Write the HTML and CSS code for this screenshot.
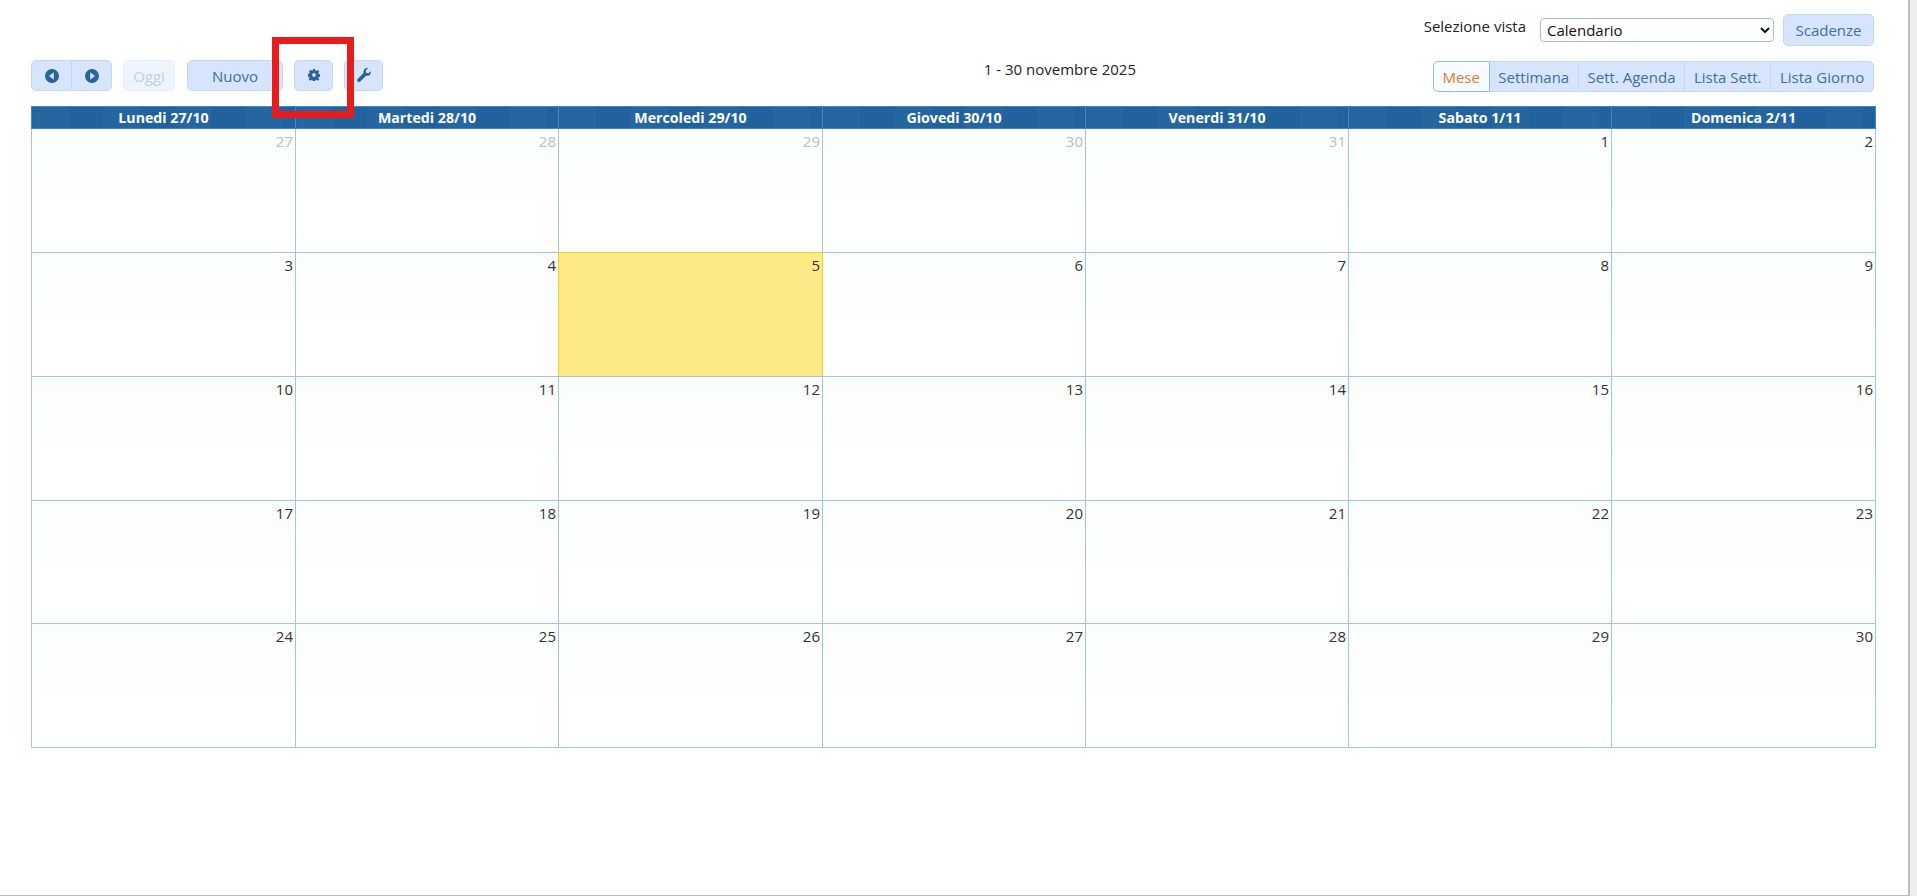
FILE: index.html
```html
<!DOCTYPE html>
<html lang="it">
<head>
<meta charset="utf-8">
<title>Calendario</title>
<link rel="stylesheet" href="styles.css">
</head>
<body>
<div class="window">
  <main class="page">
    <div class="topbar">
      <span class="view-label">Selezione vista</span>
      <select class="view-select"><option>Calendario</option></select>
      <button class="btn btn-scad">Scadenze</button>
    </div>
    <div class="toolbar">
      <div class="tools">
        <div class="group">
          <button class="btn seg btn-arrow" aria-label="Precedente"><svg class="ico" viewBox="0 0 14 14"><path fill-rule="evenodd" d="M7 0a7 7 0 1 1 0 14A7 7 0 0 1 7 0zM8.800 3.200 4 7l4.800 3.800z"/></svg></button>
          <button class="btn seg btn-arrow" aria-label="Successivo"><svg class="ico" viewBox="0 0 14 14"><path fill-rule="evenodd" d="M7 0a7 7 0 1 1 0 14A7 7 0 0 1 7 0zM5.200 3.200 10 7l-4.800 3.800z"/></svg></button>
        </div>
        <button class="btn btn-oggi">Oggi</button>
        <button class="btn btn-nuovo">Nuovo</button>
        <button class="btn btn-icon" aria-label="Impostazioni"><svg class="ico ico-gear" viewBox="0 0 14 14"><path fill-rule="evenodd" d="M5.700 0h2.600l.4 2 1 .4 1.700-1.100 1.800 1.800-1.100 1.700.4 1 2 .4v2.600l-2 .4-.4 1 1.100 1.700-1.800 1.800-1.700-1.100-1 .4-.4 2H5.700l-.4-2-1-.4-1.700 1.100-1.800-1.800 1.100-1.700-.4-1-2-.4V5.700l2-.4.4-1L1.300 2.600l1.800-1.800 1.700 1.100 1-.4zM7 4.800a2.200 2.200 0 1 0 0 4.400 2.200 2.200 0 0 0 0-4.400z"/></svg></button>
        <button class="btn btn-icon btn-wrench" aria-label="Strumenti"><svg class="ico ico-wrench" viewBox="0 0 14 14"><path d="M13.800 3.200c.3 1.400-.1 2.800-1.100 3.700-1 .9-2.400 1.200-3.600.8L3.300 13.500c-.7.700-1.900.7-2.600 0-.7-.7-.7-1.900 0-2.600l5.800-5.800C6.100 3.800 6.400 2.400 7.300 1.400 8.300.4 9.700-.1 11 .2L8.700 2.500l.4 2.200 2.200.5z"/></svg></button>
      </div>
      <div class="title">1 - 30 novembre 2025</div>
      <div class="group views">
        <button class="btn seg view active">Mese</button>
        <button class="btn seg view">Settimana</button>
        <button class="btn seg view">Sett. Agenda</button>
        <button class="btn seg view">Lista Sett.</button>
        <button class="btn seg view">Lista Giorno</button>
      </div>
    </div>
    <table class="cal">
      <thead>
        <tr><th>Lunedi 27/10</th><th>Martedi 28/10</th><th>Mercoledi 29/10</th><th>Giovedi 30/10</th><th class="narrow">Venerdi 31/10</th><th>Sabato 1/11</th><th>Domenica 2/11</th></tr>
      </thead>
      <tbody>
        <tr><td class="other">27</td><td class="other">28</td><td class="other">29</td><td class="other">30</td><td class="other">31</td><td>1</td><td>2</td></tr>
        <tr><td>3</td><td>4</td><td class="today">5</td><td>6</td><td>7</td><td>8</td><td>9</td></tr>
        <tr><td>10</td><td>11</td><td>12</td><td>13</td><td>14</td><td>15</td><td>16</td></tr>
        <tr class="row-short"><td>17</td><td>18</td><td>19</td><td>20</td><td>21</td><td>22</td><td>23</td></tr>
        <tr><td>24</td><td>25</td><td>26</td><td>27</td><td>28</td><td>29</td><td>30</td></tr>
      </tbody>
    </table>
    <div class="marker"></div>
  </main>
  <div class="scroll-track"></div>
</div>
</body>
</html>
```

FILE: styles.css
```css
* { box-sizing: border-box; }
html, body { margin: 0; height: 100%; overflow: hidden; background: #eeeeee; }
body { font-family: "Open Sans", "Liberation Sans", sans-serif; font-size: 15px; color: #222; }
.window { display: flex; height: 896px; }
.page {
  position: relative;
  width: 1910px;
  height: 896px;
  padding: 14px 34px 0 31px;
  background: #fff;
  border-right: 2px solid #bcbcbc;
  border-bottom: 1px solid #bcbcbc;
}
.scroll-track { flex: 1; background: #eeeeee; }
.topbar { display: flex; align-items: flex-start; justify-content: flex-end; height: 46px; }
.view-label { margin-top: 3px; margin-right: 14px; color: #222; line-height: 19px; }
.view-select {
  width: 234px; height: 24px; margin-top: 4px; margin-right: 9px; padding: 0 0 0 2px;
  font: 15px "Open Sans", sans-serif; color: #111; background: #fff;
  border: 1px solid #9cc2e2; border-radius: 4px;
}
.btn {
  font: 15px "Open Sans", sans-serif; color: #3f6f9f; background: #d6e5fb;
  border: 1px solid #c5d9ee; border-radius: 5px; padding: 0; height: 31px; cursor: pointer;
}
.btn-scad { width: 91px; height: 32px; }
.toolbar { display: flex; align-items: flex-start; height: 46px; }
.tools { display: flex; gap: 11px; }
.group { display: flex; }
.seg { border-radius: 0; margin-left: -1px; }
.group .seg:first-child { border-radius: 5px 0 0 5px; margin-left: 0; }
.group .seg:last-child { border-radius: 0 5px 5px 0; }
.btn-arrow { width: 41px; display: flex; align-items: center; justify-content: center; }
.btn-oggi { width: 52px; color: #c0d0e0; background: #edf4fe; border-color: #e4eefa; }
.btn-nuovo { width: 96px; margin-left: 1px; padding-top: 1px; }
.btn-icon { width: 39px; display: flex; align-items: center; justify-content: center; }
.ico { display: block; width: 14px; height: 14px; fill: #2a6496; }
.ico-gear { width: 12px; height: 12px; margin-top: -2px; }
.ico-wrench { margin-top: -2px; }
.title { flex: 1; padding-left: 304px; text-align: center; line-height: 19px; color: #222; }
.views { margin-top: 1px; }
.view { height: 31px; padding: 0 8.7px; white-space: nowrap; }
.view.active { color: #e07b2a; background: #f8fbff; border-color: #8fbde6; position: relative; }
.cal { width: 1845px; border-collapse: collapse; table-layout: fixed; }
.cal th {
  width: 263px; height: 22px; padding: 0; font-size: 14.2px; font-weight: 700; color: #fff; line-height: 18px;
  background: repeating-linear-gradient(90deg, rgba(255,255,255,.01) 0 37px, rgba(0,0,0,.018) 37px 71px), #22649f;
  border: 1px solid #3d88c9;
}
.cal th:nth-child(odd) { width: 264px; }
.cal th.narrow { width: 263px; }
.cal td {
  height: 124px; padding: 3px 2px 0 0; vertical-align: top; text-align: right; font-size: 15px; line-height: 19px;
  color: #333; background: linear-gradient(#fbfdfc, #ffffff 70%); border: 1px solid #a0c6e6;
}
.cal .row-short td { height: 123px; }
.cal td.other { color: #bdbdbd; }
.cal td.today { position: relative; background: #fbea85; color: #333; }
.cal td.today::after {
  content: ""; position: absolute; left: -1px; top: -1px; right: -1px; bottom: 0;
  border: 1px solid #f6cf2c; border-bottom: 0; pointer-events: none;
}
.marker {
  position: absolute; left: 272px; top: 37px; width: 82px; height: 81px;
  border: 7px solid #e81c1c; pointer-events: none;
}
```
